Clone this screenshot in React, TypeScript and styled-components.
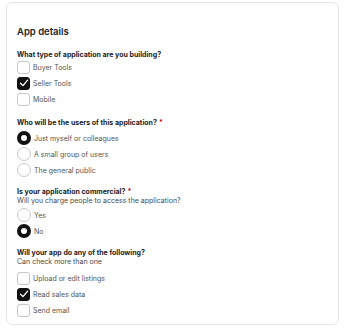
import * as React from 'react';
import styled, { createGlobalStyle } from 'styled-components';

// ______________________________________________________
//
// @ Global

const GlobalStyle = createGlobalStyle`
  html, body {
    margin: 0;
    padding: 0;
    background: #ffffff;
  }
  body {
    font-family: Inter, "Noto Sans", sans-serif;
    color: #222222;
  }
`;

// ______________________________________________________
//
// @ Styled parts

const Page = styled.div`
  padding: 2px 9px 0 6px;
`;

const Card = styled.section`
  box-sizing: border-box;
  width: 333px;
  height: 323px;
  border: 1px solid #e6e6e6;
  border-radius: 6px;
  padding: 22px 10px 0;
`;

const Title = styled.h2`
  margin: 0 0 11px;
  font-size: 9.5px;
  line-height: 14px;
  font-weight: 600;
  color: #222222;
`;

const Group = styled.fieldset<{ $gap: number }>`
  border: 0;
  margin: 0 0 ${(p) => p.$gap}px;
  padding: 0;
`;

const Question = styled.legend`
  padding: 0;
  font-size: 7px;
  line-height: 10px;
  font-weight: 700;
  color: #222222;
`;

const Required = styled.span`
  color: #d0021b;
  margin-left: 2px;
`;

const Hint = styled.div`
  margin-top: -1px;
  font-size: 7px;
  line-height: 9px;
  color: #4a4a4a;
`;

const Options = styled.div<{ $top: number }>`
  display: flex;
  flex-direction: column;
  gap: 2px;
  margin-top: ${(p) => p.$top}px;
`;

const Option = styled.label`
  display: flex;
  align-items: center;
  gap: 3px;
  height: 14px;
  font-size: 7px;
  color: #555555;
`;

const Box = styled.span<{ $checked?: boolean }>`
  box-sizing: border-box;
  width: 13px;
  height: 13px;
  border-radius: 3px;
  border: 1px solid ${(p) => (p.$checked ? '#111111' : '#c8c8c8')};
  background: ${(p) => (p.$checked ? '#111111' : '#ffffff')};
  display: flex;
  align-items: center;
  justify-content: center;
  flex-shrink: 0;
`;

const Radio = styled.span<{ $checked?: boolean }>`
  box-sizing: border-box;
  width: 14px;
  height: 14px;
  border-radius: 50%;
  border: ${(p) => (p.$checked ? '4px solid #111111' : '1px solid #c8c8c8')};
  background: #ffffff;
  flex-shrink: 0;
`;

// ______________________________________________________
//
// @ Pieces

const Check = () => (
  <svg width="10" height="10" viewBox="0 0 10 10" fill="none">
    <path d="M1.5 5.2 L4 7.6 L8.6 2.2" stroke="#ffffff" strokeWidth="1.3" strokeLinecap="round" strokeLinejoin="round" />
  </svg>
);

type Item = { label: string; checked?: boolean };

const CheckList: React.FC<{ items: Item[]; top: number }> = ({ items, top }) => (
  <Options $top={top}>
    {items.map((it) => (
      <Option key={it.label}>
        <Box $checked={it.checked}>{it.checked && <Check />}</Box>
        {it.label}
      </Option>
    ))}
  </Options>
);

const RadioList: React.FC<{ items: Item[]; top: number }> = ({ items, top }) => (
  <Options $top={top}>
    {items.map((it) => (
      <Option key={it.label}>
        <Radio $checked={it.checked} />
        {it.label}
      </Option>
    ))}
  </Options>
);

// ______________________________________________________
//
// @ View

const App: React.FC = () => (
  <Page>
    <GlobalStyle />
    <Card>
      <Title>App details</Title>

      <Group $gap={12}>
        <Question>What type of application are you building?</Question>
        <CheckList
          top={0}
          items={[{ label: 'Buyer Tools' }, { label: 'Seller Tools', checked: true }, { label: 'Mobile' }]}
        />
      </Group>

      <Group $gap={10}>
        <Question>
          Who will be the users of this application?<Required>*</Required>
        </Question>
        <RadioList
          top={3}
          items={[
            { label: 'Just myself or colleagues', checked: true },
            { label: 'A small group of users' },
            { label: 'The general public' },
          ]}
        />
      </Group>

      <Group $gap={10}>
        <Question>
          Is your application commercial?<Required>*</Required>
        </Question>
        <Hint>Will you charge people to access the application?</Hint>
        <RadioList top={3} items={[{ label: 'Yes' }, { label: 'No', checked: true }]} />
      </Group>

      <Group $gap={0}>
        <Question>Will your app do any of the following?</Question>
        <Hint>Can check more than one</Hint>
        <CheckList
          top={5}
          items={[{ label: 'Upload or edit listings' }, { label: 'Read sales data', checked: true }, { label: 'Send email' }]}
        />
      </Group>
    </Card>
  </Page>
);

export default App;
